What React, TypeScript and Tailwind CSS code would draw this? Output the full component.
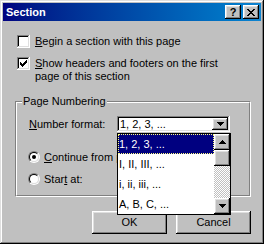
import React from "react"

const raised =
  "shadow-[inset_-1px_-1px_#000,inset_1px_1px_#fff,inset_-2px_-2px_#808080,inset_2px_2px_#dfdfdf]"
const sunken =
  "shadow-[inset_-1px_-1px_#fff,inset_1px_1px_#808080,inset_-2px_-2px_#dfdfdf,inset_2px_2px_#000]"

function Arrow({ up = false }: { up?: boolean }) {
  return (
    <svg width="7" height="4" viewBox="0 0 7 4" shapeRendering="crispEdges" className={up ? "rotate-180" : ""}>
      <path d="M0 0h7v1H0zM1 1h5v1H1zM2 2h3v1H2zM3 3h1v1H3z" fill="#000" />
    </svg>
  )
}

function CheckBox({ checked }: { checked?: boolean }) {
  const pts = [
    [6, 0], [5, 1], [6, 1], [0, 2], [4, 2], [5, 2], [6, 2],
    [0, 3], [1, 3], [3, 3], [4, 3], [5, 3],
    [0, 4], [1, 4], [2, 4], [3, 4], [4, 4], [1, 5], [2, 5], [3, 5], [2, 6],
  ]
  return (
    <span className={`flex h-[13px] w-[13px] shrink-0 items-center justify-center bg-white ${sunken}`}>
      {checked && (
        <svg width="7" height="7" viewBox="0 0 7 7" shapeRendering="crispEdges">
          {pts.map(([x, y]) => (
            <rect key={`${x}-${y}`} x={x} y={y} width="1" height="1" fill="#000" />
          ))}
        </svg>
      )}
    </span>
  )
}

function Radio({ checked }: { checked?: boolean }) {
  return (
    <span className="flex h-[12px] w-[12px] shrink-0 rounded-full border border-[#808080] border-b-white border-r-white">
      <span className="flex flex-1 items-center justify-center rounded-full border border-black border-b-[#dfdfdf] border-r-[#dfdfdf] bg-white">
        {checked && <span className="h-[4px] w-[4px] rounded-full bg-black" />}
      </span>
    </span>
  )
}

export default function App() {
  const items = ["1, 2, 3, ...", "I, II, III, ...", "i, ii, iii, ...", "A, B, C, ..."]

  return (
    <div
      className={`flex h-[244px] w-[264px] flex-col bg-[#c0c0c0] p-[3px] text-[11px] text-black shadow-[inset_-1px_-1px_#000,inset_1px_1px_#dfdfdf,inset_-2px_-2px_#808080,inset_2px_2px_#fff]`}
      style={{ fontFamily: '"Liberation Sans", Arial, sans-serif' }}
    >
      {/* title bar */}
      <div className="flex h-[18px] items-center bg-linear-to-r from-[#000080] to-[#1084d0] pl-[3px] pr-[2px]">
        <span className="text-[11px] font-bold leading-none text-white">Section</span>
        <div className="ml-auto flex gap-[2px]">
          <span className={`flex h-[14px] w-[16px] items-center justify-center bg-[#c0c0c0] text-[11px] font-bold leading-none ${raised}`}>
            ?
          </span>
          <span className={`flex h-[14px] w-[16px] items-center justify-center bg-[#c0c0c0] ${raised}`}>
            <svg width="8" height="7" viewBox="0 0 8 7" shapeRendering="crispEdges">
              <path
                d="M0 0h2v1H0zM6 0h2v1H6zM1 1h2v1H1zM5 1h2v1H5zM2 2h4v1H2zM3 3h2v1H3zM2 4h4v1H2zM1 5h2v1H1zM5 5h2v1H5zM0 6h2v1H0zM6 6h2v1H6z"
                fill="#000"
              />
            </svg>
          </span>
        </div>
      </div>

      {/* body */}
      <div className="relative flex flex-1 flex-col">
        <label className="ml-[14px] mt-[14px] flex h-[13px] items-center">
          <CheckBox />
          <span className="ml-[5px] leading-[13px]">
            <u>B</u>egin a section with this page
          </span>
        </label>

        <label className="ml-[14px] mt-[9px] flex items-start">
          <CheckBox checked />
          <span className="ml-[5px] leading-[13px]">
            <u>S</u>how headers and footers on the first
            <br />
            page of this section
          </span>
        </label>

        {/* group box */}
        <div className="relative ml-[12px] mt-[18px] h-[96px] w-[236px] border border-[#808080] border-b-white border-r-white">
          <div className="flex h-full flex-col border border-white border-b-[#808080] border-r-[#808080]">
            <span className="absolute -top-[7px] left-[6px] bg-[#c0c0c0] px-[1px] leading-[13px]">Page Numbering</span>

            <div className="mt-[13px] flex h-[16px] items-center">
              <span className="ml-[12px] w-[88px]">
                <u>N</u>umber format:
              </span>
              <div className={`flex h-[16px] w-[113px] items-center bg-white pl-[3px] pr-[2px] ${sunken}`}>
                <span className="leading-none">1, 2, 3, ...</span>
                <span className={`ml-auto flex h-[12px] w-[16px] items-center justify-center bg-[#c0c0c0] ${raised}`}>
                  <Arrow />
                </span>
              </div>
            </div>

            <label className="ml-[11px] mt-[19px] flex h-[12px] items-center">
              <Radio checked />
              <span className="ml-[4px] w-[73px] overflow-hidden whitespace-nowrap leading-[13px]">
                <u>C</u>ontinue from previous section
              </span>
            </label>

            <label className="ml-[11px] mt-[10px] flex h-[12px] items-center">
              <Radio />
              <span className="ml-[4px] leading-none">
                Star<u>t</u> at:
              </span>
            </label>
          </div>
        </div>

        <div className="mt-[14px] flex justify-end gap-[9px] pr-[10px]">
          <button className={`h-[23px] w-[75px] bg-[#c0c0c0] ${raised}`}>OK</button>
          <button className={`h-[23px] w-[75px] bg-[#c0c0c0] ${raised}`}>Cancel</button>
        </div>

        {/* dropped list */}
        <div className="absolute left-[114px] top-[112px] flex h-[82px] w-[114px] border border-black bg-white">
          <div className="flex flex-1 flex-col">
            {items.map((it, i) => (
              <div
                key={it}
                className={
                  i === 0
                    ? "flex h-[20px] items-center border border-dotted border-[#ffff80] bg-[#000080] text-white"
                    : "flex h-[20px] items-center pl-[1px]"
                }
              >
                {it}
              </div>
            ))}
          </div>
          <div className="flex w-[16px] flex-col">
            <span className={`flex h-[16px] items-center justify-center bg-[#c0c0c0] ${raised}`}>
              <Arrow up />
            </span>
            <span className={`h-[16px] bg-[#c0c0c0] ${raised}`} />
            <span className="flex-1 bg-[repeating-conic-gradient(#c0c0c0_0_25%,#fff_0_50%)] bg-[length:2px_2px]" />
            <span className={`flex h-[16px] items-center justify-center bg-[#c0c0c0] ${raised}`}>
              <Arrow />
            </span>
          </div>
        </div>
      </div>
    </div>
  )
}
